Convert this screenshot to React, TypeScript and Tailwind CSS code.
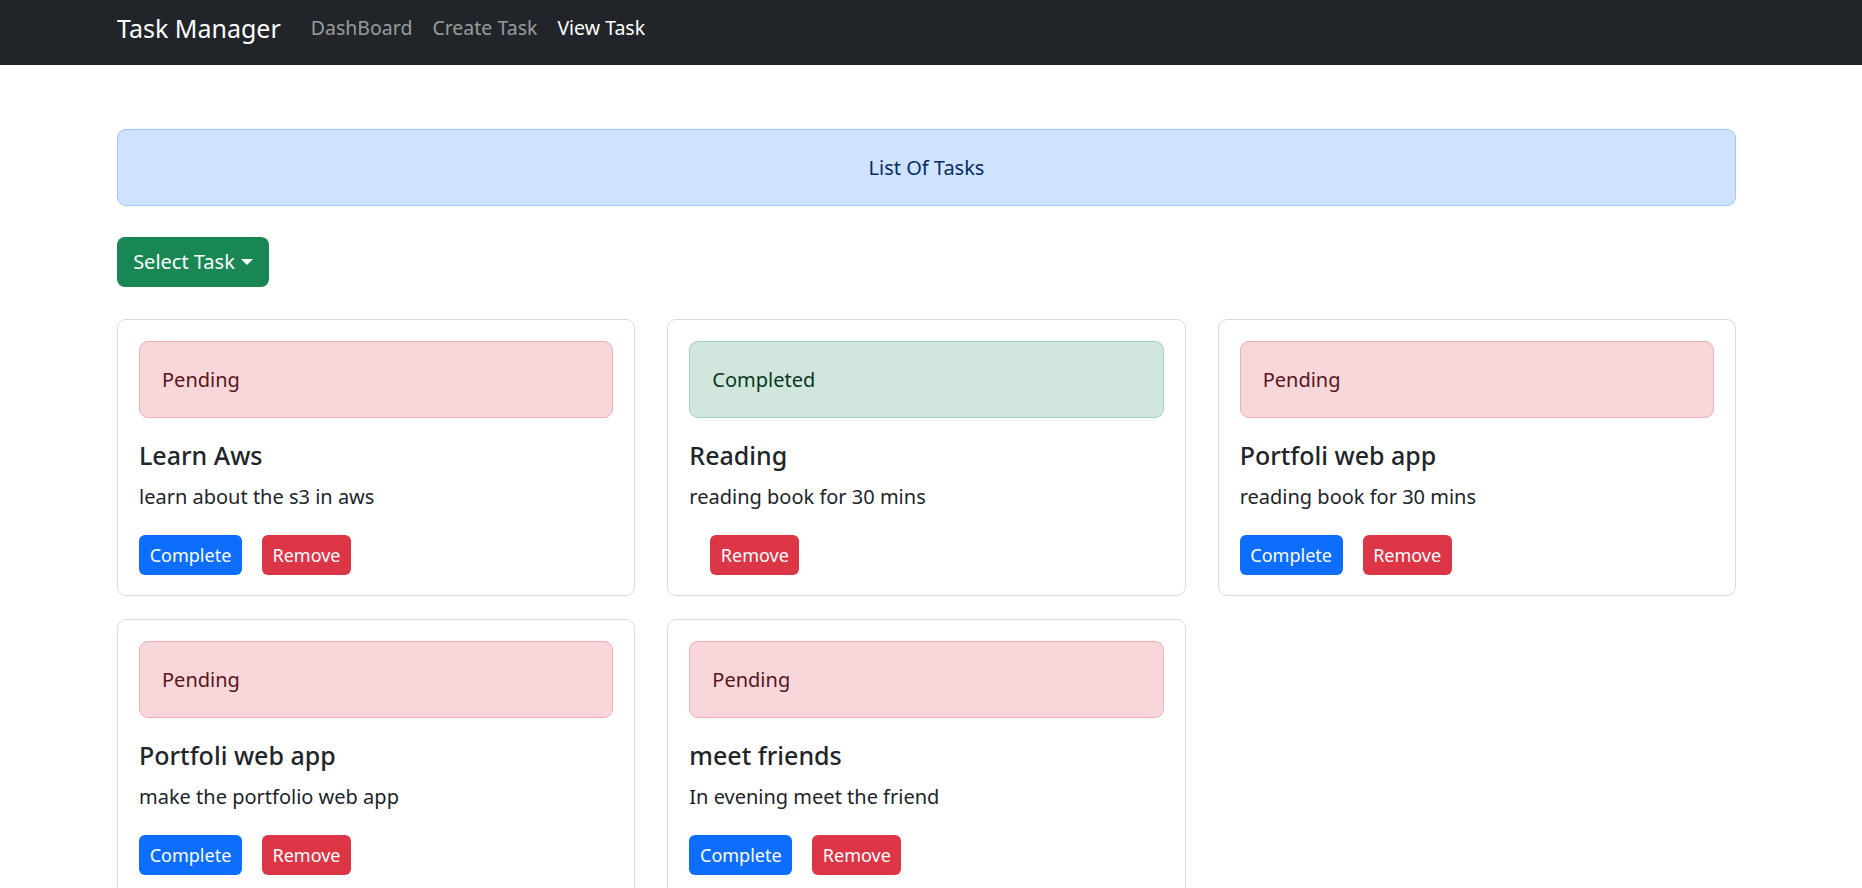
import React from "react";

type Task = {
  title: string;
  desc: string;
  done: boolean;
};

const tasks: Task[] = [
  { title: "Learn Aws", desc: "learn about the s3 in aws", done: false },
  { title: "Reading", desc: "reading book for 30 mins", done: true },
  { title: "Portfoli web app", desc: "reading book for 30 mins", done: false },
  { title: "Portfoli web app", desc: "make the portfolio web app", done: false },
  { title: "meet friends", desc: "In evening meet the friend", done: false },
];

function TaskCard({ task }: { task: Task }) {
  return (
    <div className="rounded-[9px] border border-[#d9dcdf] bg-white px-[21px] pt-[21px] pb-[20px]">
      {task.done ? (
        <div className="flex h-[77px] items-center rounded-[9px] border border-[#a3cfbb] bg-[#d1e7dd] px-[22px] text-[20px] text-[#0a3622]">
          Completed
        </div>
      ) : (
        <div className="flex h-[77px] items-center rounded-[9px] border border-[#f1aeb5] bg-[#f8d7da] px-[22px] text-[20px] text-[#58151c]">
          Pending
        </div>
      )}
      <h5 className="mt-[22px] mb-[12px] text-[25px] leading-[30px] font-medium text-[#212529]">
        {task.title}
      </h5>
      <p className="mb-[23px] text-[20px] leading-[30px] text-[#212529]">{task.desc}</p>
      <div className="flex">
        {!task.done && (
          <button className="mr-[20px] h-[40px] w-[103px] rounded-[6px] bg-[#0d6efd] text-[18px] text-white">
            Complete
          </button>
        )}
        <button
          className={
            task.done
              ? "ml-[21px] h-[40px] w-[89px] rounded-[6px] bg-[#dc3545] text-[18px] text-white"
              : "h-[40px] w-[89px] rounded-[6px] bg-[#dc3545] text-[18px] text-white"
          }
        >
          Remove
        </button>
      </div>
    </div>
  );
}

export default function App() {
  return (
    <div className="min-h-screen bg-white font-['Noto_Sans','Open_Sans',sans-serif] text-[#212529]">
      <nav className="h-[65px] bg-[#212529]">
        <div className="ml-[117px] flex h-full w-[1619px] items-center pb-[9px]">
          <span className="mr-[20px] text-[25px] leading-[30px] text-white">Task Manager</span>
          <a className="px-[10px] text-[19.5px] text-[rgba(255,255,255,0.55)]">DashBoard</a>
          <a className="px-[10px] text-[19.5px] text-[rgba(255,255,255,0.55)]">Create Task</a>
          <a className="px-[10px] text-[19.5px] text-white">View Task</a>
        </div>
      </nav>
      <main className="ml-[117px] w-[1619px] pt-[64px]">
        <div className="flex h-[77px] items-center justify-center rounded-[9px] border border-[#9ec5fe] bg-[#cfe2ff] text-[20px] text-[#052c65]">
          List Of Tasks
        </div>
        <button className="mt-[31px] flex h-[50px] w-[152px] items-center justify-center rounded-[8px] bg-[#198754] text-[20px] text-white">
          Select Task
          <span className="ml-[6px] inline-block h-0 w-0 border-x-[6px] border-t-[6px] border-x-transparent border-t-white" />
        </button>
        <div className="mt-[32px] grid grid-cols-3 gap-x-[32px] gap-y-[23px]">
          {tasks.map((t, i) => (
            <TaskCard key={i} task={t} />
          ))}
        </div>
      </main>
    </div>
  );
}
